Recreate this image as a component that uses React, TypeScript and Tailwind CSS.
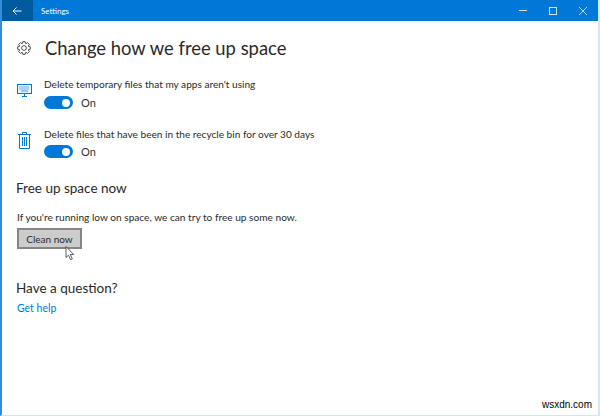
import React from "react";

function Toggle() {
  return (
    <div className="flex items-center gap-[8px]">
      <div className="w-[29px] h-[13px] rounded-full bg-[#0078d7] flex items-center justify-end pr-[3px]">
        <div className="w-[8px] h-[8px] rounded-full bg-white" />
      </div>
      <span className="text-[11px] leading-[13px] text-[#333]">On</span>
    </div>
  );
}

function gearPath() {
  const n = 8;
  const pts: string[] = [];
  for (let i = 0; i < n; i++) {
    const c = (i / n) * Math.PI * 2;
    const at = (r: number, d: number) => {
      const a = c + d;
      return `${(12 + r * Math.cos(a)).toFixed(2)} ${(12 + r * Math.sin(a)).toFixed(2)}`;
    };
    pts.push(at(8.2, -0.34), at(11, -0.2), at(11, 0.2), at(8.2, 0.34));
  }
  return "M" + pts.join("L") + "Z";
}

function Gear() {
  return (
    <svg width="14" height="14" viewBox="0 0 24 24" fill="none" stroke="#333" strokeWidth="1.5" strokeLinejoin="round">
      <path d={gearPath()} />
      <circle cx="12" cy="12" r="4" />
    </svg>
  );
}

function Keyboard() {
  return (
    <svg width="15" height="13" viewBox="0 0 15 13" fill="none" stroke="#0078d7" strokeWidth="1">
      <rect x="0.5" y="0.5" width="14" height="9" fill="#e6f1fb" />
      <path d="M7.5 9.5v2.5M5 12.5h5" />
      <path d="M2.5 3h10M2.5 5h10" strokeDasharray="1 1" />
      <path d="M4 7h7" strokeOpacity="0.7" />
    </svg>
  );
}

function Trash() {
  return (
    <svg width="13" height="17" viewBox="0 0 13 17" fill="none" stroke="#0078d7" strokeWidth="1">
      <path d="M0 2.5h13M4.5 2.5V.5h4v2M1.5 2.5v14h10v-14" />
      <path d="M4.5 5v9M6.5 5v9M8.5 5v9" />
    </svg>
  );
}

export default function App() {
  return (
    <div className="w-[600px] h-[416px] bg-white flex flex-col border-l-2 border-r-2 border-b border-l-[#2f8fdc] border-r-[#d4e6f4] border-b-[#d4e6f4] relative overflow-hidden font-['Lato','Noto_Sans',sans-serif] text-[#2a2a2a]">
      <div className="h-[21px] -ml-[2px] -mr-[2px] bg-[#0078d7] flex items-center text-white shrink-0">
        <div className="w-[33px] h-full bg-[#005a9e] flex items-center justify-center">
          <svg width="10" height="10" viewBox="0 0 10 10" fill="none" stroke="white" strokeWidth="1">
            <path d="M9.5 5H1M4.5 1.5L1 5l3.5 3.5" />
          </svg>
        </div>
        <span className="ml-[8px] text-[8px] leading-none">Settings</span>
        <div className="ml-auto flex items-center">
          <div className="w-[30px] flex justify-center"><div className="w-[8px] h-[1px] bg-white/80" /></div>
          <div className="w-[30px] flex justify-center"><div className="w-[8px] h-[8px] border border-white/80" /></div>
          <div className="w-[30px] flex justify-center mr-[2px]">
            <svg width="8" height="8" viewBox="0 0 8 8" stroke="white" strokeOpacity="0.8" strokeWidth="0.9"><path d="M0 0l8 8M8 0L0 8" /></svg>
          </div>
        </div>
      </div>

      <div className="flex flex-col pl-[14px]">
        <div className="flex items-center mt-[15px] h-[24px] pl-[1px]">
          <Gear />
          <h1 className="ml-[14px] text-[18.4px] leading-[24px] font-normal">Change how we free up space</h1>
        </div>

        <div className="flex mt-[17px]">
          <div className="w-[28px] pl-[1px] pt-[7px]"><Keyboard /></div>
          <div className="flex flex-col gap-[5px]">
            <span className="text-[10.1px] leading-[14px]">Delete temporary files that my apps aren't using</span>
            <Toggle />
          </div>
        </div>
        <div className="flex mt-[18px]">
          <div className="w-[28px] pl-[2px] pt-[5px]"><Trash /></div>
          <div className="flex flex-col gap-[4px]">
            <span className="text-[10.1px] leading-[14px]">Delete files that have been in the recycle bin for over 30 days</span>
            <Toggle />
          </div>
        </div>

        <h2 className="mt-[21px] text-[13.5px] leading-[18px] font-normal">Free up space now</h2>
        <p className="mt-[13px] ml-[1px] text-[10.15px] leading-[14px]">If you're running low on space, we can try to free up some now.</p>
        <div className="mt-[4px] ml-[1px] w-[65px] h-[21px] bg-[#cccccc] border-2 border-[#858585] flex items-center justify-center text-[10px] leading-none">Clean now</div>

        <h2 className="mt-[30px] text-[13.5px] leading-[18px] font-normal">Have a question?</h2>
        <a className="mt-[4px] ml-[1px] text-[10.5px] leading-[14px] text-[#0078d7]">Get help</a>
      </div>

      <svg className="absolute left-[63px] top-[246px]" width="11" height="15" viewBox="0 0 11 15" fill="white" stroke="#333" strokeWidth="0.8">
        <path d="M1 .5v11l2.5-2.3 2 4.5 1.8-.8-2-4.4h3.4z" />
      </svg>

      <span className="absolute right-[6px] bottom-[4px] text-[10px] leading-[12px] text-black font-['Liberation_Sans',sans-serif]">wsxdn.com</span>
    </div>
  );
}
